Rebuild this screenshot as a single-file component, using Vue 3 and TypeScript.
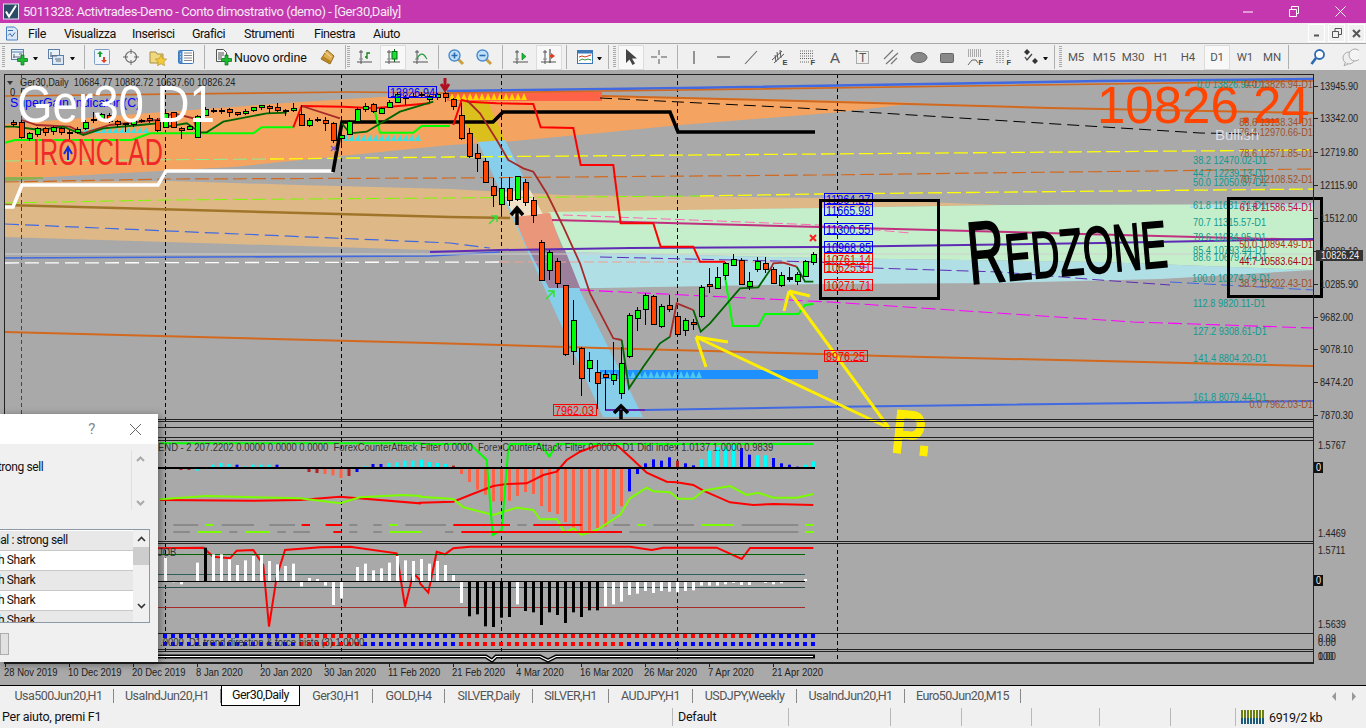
<script setup lang="ts">
type XY = [number, number]
type Candle = [number, number, number, number, string]

const z3 = (p: XY): XY => [p[0] / 3, 70 + p[1] / 3]
const z4 = (p: XY): XY => [430 + p[0] / 3, 80 + p[1] / 3]
const z6 = (p: XY): XY => [p[0] / 3, 410 + p[1] / 3]
const z7 = (p: XY): XY => [420 + p[0] / 3, 420 + p[1] / 3]
const str = (a: XY[]) => a.map((p) => p[0].toFixed(1) + ',' + p[1].toFixed(1)).join(' ')
const flat = (a: number[], fn: (p: XY) => XY = (p) => p): XY[] => {
  const out: XY[] = []
  for (let i = 0; i < a.length; i += 2) out.push(fn([a[i], a[i + 1]]))
  return out
}

const bands = [
  { fill: '#f4a460', p: [5,124,150,113,300,102,445,93,602,96,800,100,920,103,830,113,680,125,600,133,502,142,450,145,233,167,50,177,5,178] },
  { fill: '#8fb050', p: [5,177,43,177,43,179,5,181] },
  { fill: '#deb887', p: [5,182,170,181,300,185,450,189,563,195,820,198,950,203,1000,205,820,208,560,213,535,250,430,250,5,237] },
  { fill: '#c4efca', p: [548,212,820,208,1000,205,1313,204,1313,270,1100,262,820,258,565,252] },
  { fill: '#b0e0e6', p: [565,252,820,258,1100,262,1313,270,1160,279,1000,283,820,284,600,288,580,288] },
  { fill: '#b0e0e6', p: [1190,206,1313,203,1313,207,1190,208] },
  { fill: '#dbbf1c', p: [462,100,487,100,505,140,478,142,466,125] },
  { fill: '#87ceeb', p: [478,142,505,140,643,417,603,417] },
  { fill: '#f3e2ca', p: [502,192,530,190,562,250,531,250] },
  { fill: '#e9967a', p: [514,217,550,213,562,250,528,250] },
  { fill: '#9b7f9b', p: [529,250,565,250,580,288,549,288] },
  { fill: '#ff6347', p: [447,92,602,92,602,101,447,101] },
  { fill: '#1e90ff', p: [600,370,818,370,818,379,600,379] }
].map((b) => ({ fill: b.fill, points: str(flat(b.p)) }))

const zig = (x0: number, x1: number, top: number, bot: number, step = 6) => {
  const a: XY[] = [[x0, bot]]
  for (let x = x0; x + step <= x1; x += step) a.push([x + step / 2, top], [x + step, bot])
  return str(a)
}
const zigs = [
  { c: '#40e0e0', points: zig(77, 150, 127, 133) },
  { c: '#40e0e0', points: zig(343, 423, 134, 141) },
  { c: '#ffd700', points: zig(449, 528, 93, 100) },
  { c: '#4fc8f0', points: zig(600, 705, 371, 378) }
]

const lines = [
  { c: '#4169e1', w: 2.5, p: flat([447,91,683,88,1100,81,1313,79]) },
  { c: '#d2691e', w: 1.6, p: flat([5,96,350,92,447,93,683,90,1313,81]) },
  { c: '#d2691e', w: 2, p: flat([602,96,800,101,1050,108,1313,113]) },
  { c: '#000', w: 1, d: '12 6', p: flat([600,98,800,108,1200,133,1260,134]) },
  { c: '#90ee90', w: 1, d: '14 5', p: flat([5,161,270,159]) },
  { c: '#ffff00', w: 1.3, d: '14 5', p: flat([270,159,450,157,820,154,1313,150]) },
  { c: '#d2691e', w: 1.2, d: '14 5', p: flat([5,182,170,179,450,178,820,175,1313,169]) },
  { c: '#7cfc00', w: 1, d: '14 5', p: flat([5,203,165,200,450,198,700,196]) },
  { c: '#ffff00', w: 1.3, d: '14 5', p: flat([700,196,820,194,1313,189]) },
  { c: '#a0752a', w: 2.4, p: flat([5,205,450,217,510,218]) },
  { c: '#4169e1', w: 1.2, d: '14 6', p: flat([5,224,450,243,490,248]) },
  { c: '#ff69b4', w: 1, d: '10 4', p: flat([563,215,820,225,910,233]) },
  { c: '#c0307f', w: 2, p: flat([552,220,820,227,1313,240]) },
  { c: '#5f2bb5', w: 2, p: flat([430,252,500,250,630,248,820,247,1100,243,1313,239]) },
  { c: '#4169e1', w: 1.6, p: flat([5,258,430,256,500,252]) },
  { c: '#cfcfcf', w: 1, p: flat([5,254,1313,254]) },
  { c: '#fff', w: 1.3, d: '14 6', p: flat([5,263,500,262]) },
  { c: '#f0a090', w: 1, d: '10 4', p: flat([500,262,830,262]) },
  { c: '#5f2bb5', w: 1, d: '12 5', p: flat([600,257,820,262,872,268,1000,272,1100,280,1170,285]) },
  { c: '#4169e1', w: 1, d: '12 5', p: flat([1170,282,1313,290]) },
  { c: '#ff00ff', w: 1.1, d: '14 5', p: flat([580,290,830,302,1133,322,1313,328]) },
  { c: '#d2691e', w: 2, p: flat([5,332,430,343,600,348,820,354,883,356,1313,366]) },
  { c: '#5f2bb5', w: 2, p: flat([605,410,645,410]) },
  { c: '#4169e1', w: 2, p: flat([645,410,820,407,1313,401]) },
  { c: '#fff', w: 3.4, p: flat([5,207,13,207,22,185,158,185,166,171,333,171]) },
  { c: '#000', w: 3.6, p: flat([333,172,342,122,493,122,503,112,670,112,678,132,815,132]) },
  { c: '#00ff00', w: 2, p: flat([15,218,45,210,395,210,450,190,760,190,785,172,880,172], z3) },
  { c: '#00ff00', w: 2, p: flat([1125,125,1140,188,1240,188,1265,168,1350,168], z3) },
  { c: '#00ff00', w: 2, p: flat([885,590,908,738,985,738,1005,702,1105,702,1125,675,1150,672], z4) },
  { c: '#ff0000', w: 2, p: flat([880,172,905,108,1030,110,1120,115,1290,100], z3) },
  { c: '#ff0000', w: 2, p: flat([70,135,95,60,115,65,200,70,310,72,332,142,430,144,452,255,550,255,572,430,670,430,692,500,790,500,810,545,885,545], z4) },
  { c: '#a52a2a', w: 1.8, p: flat([65,150,110,165,210,170,250,190,330,165,470,150,520,130,580,145,590,180], z3) },
  { c: '#a52a2a', w: 1.8, p: flat([905,108,1020,145], z3) },
  { c: '#a52a2a', w: 1.8, p: flat([110,60,150,100,200,180,235,240,280,265,310,275,350,340,400,440,450,550,480,640,550,775,575,780], z4) },
  { c: '#a52a2a', w: 1.8, p: flat([720,770,740,670,790,690], z4) },
  { c: '#a52a2a', w: 1.8, p: flat([1020,570,1030,550,1060,548,1100,560], z4) },
  { c: '#006400', w: 1.8, p: flat([15,170,45,170,120,180,190,170,250,195,310,175,420,165,470,160,490,145,500,170,560,160,600,187,620,187,670,155,800,130,860,128], z3) },
  { c: '#006400', w: 1.8, p: flat([1025,160,1050,190,1100,185,1200,125,1300,95], z3) },
  { c: '#006400', w: 1.8, p: flat([575,780,597,925,640,860,690,790,720,770], z4) },
  { c: '#006400', w: 1.8, p: flat([790,690,812,755,840,730,930,625,985,622,1020,570], z4) },
  { c: '#006400', w: 1.8, p: flat([1100,560,1125,605,1150,605], z4) }
].map((l) => ({ c: l.c, w: l.w, d: l.d ?? 'none', points: str(l.p) }))

const leftC: Candle[] = [
  [150,170,156,163,'r'],[150,205,158,202,'r'],[185,212,190,205,'g'],[170,200,175,193,'g'],[172,198,175,188,'r'],
  [168,195,172,183,'g'],[172,195,175,187,'r'],[180,210,186,188,'k'],[172,193,178,187,'g'],[150,180,157,175,'g'],
  [125,158,147,150,'k'],[130,150,133,145,'g'],[130,160,135,155,'r'],[150,170,154,163,'r'],[158,185,160,162,'k'],
  [148,170,151,163,'g'],[148,158,150,153,'k'],[135,158,144,150,'r'],[145,185,150,182,'r'],[125,175,129,172,'g'],
  [125,175,127,172,'r'],[170,208,175,180,'r'],[165,180,170,178,'g'],[135,205,140,202,'g'],[112,138,118,135,'g'],
  [115,130,120,122,'k'],[115,133,122,124,'k'],[115,140,118,128,'r'],[125,138,127,132,'r'],[118,135,123,130,'g'],
  [110,125,112,120,'g'],[105,120,106,112,'g'],[105,130,110,116,'r'],[98,125,113,121,'r'],[118,138,120,122,'k'],
  [100,125,115,121,'g'],[105,168,133,166,'r'],[145,170,150,166,'g'],[140,155,148,150,'k'],[140,182,150,160,'r'],
  [155,220,160,210,'r'],[140,235,197,205,'g'],[150,195,155,192,'g'],[110,155,118,153,'g'],[100,125,108,118,'g'],
  [100,128,103,125,'r'],[110,130,115,130,'g'],[90,115,97,112,'g'],[65,100,74,98,'g'],[75,105,82,84,'k'],
  [70,85,78,80,'k'],[65,85,72,74,'k'],[75,95,80,88,'g'],[68,90,74,82,'g'],[65,95,70,82,'r']
]
const rightC: Candle[] = [
  [55,90,58,80,'r'],[70,180,105,175,'r'],[145,235,160,230,'r'],[192,275,220,235,'r'],[235,310,244,308,'r'],
  [295,380,320,346,'r'],[295,405,325,373,'g'],[290,378,325,362,'r'],[288,362,290,358,'g'],[298,378,308,368,'r'],
  [350,428,362,405,'r'],[480,603,488,600,'r'],[510,600,518,570,'g'],[535,625,545,610,'r'],[615,827,616,823,'r'],
  [660,855,722,814,'g'],[800,948,806,895,'r'],[815,905,842,865,'g'],[840,988,878,910,'r'],[870,990,884,892,'r'],
  [785,915,884,902,'g'],[800,958,850,940,'g'],[700,835,706,830,'g'],[680,752,692,715,'g'],[640,735,647,688,'g'],
  [645,735,650,732,'r'],[672,745,680,738,'g'],[645,695,676,688,'r'],[700,765,710,762,'r'],[715,768,722,750,'g'],
  [717,750,728,733,'r'],[615,715,622,708,'g'],[565,640,613,619,'r'],[562,628,592,624,'g'],[545,600,550,586,'g'],
  [523,558,538,556,'g'],[535,615,541,612,'r'],[575,630,604,618,'g'],[530,575,545,568,'g'],[530,580,549,567,'r'],
  [560,612,568,610,'r'],[575,622,586,616,'g'],[562,605,592,597,'k'],[575,614,584,604,'g'],[540,590,545,588,'g'],[515,555,524,546,'g']
]
const candleFill: Record<string, string> = { r: '#ff4500', g: '#00ff00', k: '#000' }
const candles = [
  ...leftC.map((c, i) => ({ x: (40 + 24 * i) / 3, h: 70 + c[0] / 3, l: 70 + c[1] / 3, t: 70 + c[2] / 3, b: 70 + c[3] / 3, f: candleFill[c[4]] })),
  ...rightC.map((c, i) => ({ x: 453.3 + 8 * i, h: 80 + c[0] / 3, l: 80 + c[1] / 3, t: 80 + c[2] / 3, b: 80 + c[3] / 3, f: candleFill[c[4]] }))
].map((c) => ({ ...c, x: Math.round(c.x) }))

const histColor: Record<string, string> = { c: '#00ffff', b: '#0000ff', s: '#ff6347', d: '#b22222', w: '#ffffff', k: '#000000' }
const makeBars = (x0: number, base: number, items: [number, string][]) =>
  items.map((it, n) => {
    const h = it[0] / 3
    return { x: x0 + 8 * n - 1.5, y: h > 0 ? base - h : base, h: Math.abs(h), f: histColor[it[1]] }
  })

const hist2 = [
  ...makeBars(181, 468, [[-6,'d'],[-6,'d'],[-8,'c'],[2,'c'],[10,'c'],[15,'c'],[12,'c'],[10,'b'],[5,'c'],[10,'c'],[10,'c'],[10,'c'],[10,'b'],[3,'b'],[3,'c'],[-3,'s'],[-12,'d'],[-15,'d'],[-18,'s'],[-22,'s'],[-30,'s'],[-24,'d'],[-12,'b'],[5,'c'],[12,'b'],[12,'b'],[15,'c'],[17,'c'],[22,'c'],[22,'c']]),
  ...makeBars(421.5, 468, [[25,'c'],[18,'c'],[15,'c'],[12,'c'],[7,'d'],[-18,'s'],[-42,'s'],[-65,'s'],[-80,'s'],[-100,'s'],[-100,'s'],[-98,'s'],[-84,'s'],[-72,'s'],[-78,'s'],[-114,'s'],[-132,'s'],[-138,'s'],[-162,'s'],[-180,'s'],[-190,'s'],[-188,'s'],[-180,'s'],[-176,'s'],[-138,'s'],[-115,'s'],[-70,'b'],[-18,'b'],[14,'b'],[26,'b'],[22,'b'],[32,'b'],[22,'d'],[14,'b'],[8,'b'],[26,'c'],[52,'c'],[62,'c'],[64,'c'],[72,'c'],[60,'b'],[40,'b'],[38,'c'],[38,'c'],[30,'b'],[14,'b'],[10,'b'],[4,'b'],[10,'c'],[20,'c']])
]
const hist3 = [
  ...makeBars(165.5, 581, [[70,'w'],[-4,'w'],[-10,'w'],[0,'w'],[55,'w'],[100,'k'],[80,'w'],[80,'w'],[65,'w'],[48,'w'],[62,'w'],[75,'w'],[78,'w'],[60,'w'],[50,'w'],[45,'w'],[52,'w'],[-16,'w'],[9,'w'],[6,'w'],[-14,'w'],[-72,'w'],[-52,'w'],[0,'w'],[42,'w'],[52,'w'],[32,'w'],[38,'w'],[55,'w'],[75,'w'],[62,'w'],[60,'w']]),
  ...makeBars(421.5, 581, [[66,'w'],[52,'w'],[60,'w'],[48,'w'],[18,'w'],[-66,'w'],[-106,'k'],[-100,'k'],[-136,'k'],[-138,'k'],[-110,'k'],[-108,'k'],[-70,'w'],[-90,'k'],[-94,'k'],[-132,'k'],[-94,'k'],[-102,'k'],[-126,'k'],[-94,'k'],[-108,'k'],[-88,'k'],[-88,'k'],[-76,'w'],[-70,'w'],[-62,'w'],[-42,'w'],[-38,'w'],[-30,'w'],[-36,'w'],[-30,'w'],[-32,'w'],[-34,'w'],[-30,'w'],[-28,'w'],[-14,'w'],[-14,'w'],[-14,'w'],[-10,'w'],[-6,'w'],[-12,'w'],[-12,'w'],[-3,'w'],[-6,'w'],[-10,'w'],[-7,'w'],[-3,'w'],[0,'w'],[6,'w']])
]

const oscLines = [
  { c: '#ff0000', w: 2, p: [...flat([480,270,760,272,900,270,1020,260,1260,280], z6), ...flat([0,248,100,245,150,225,220,198,260,192,320,190,370,165,410,155,440,120,480,95,540,73,590,75,640,120,680,158,740,185,770,187,820,195,850,212,930,247,1000,255,1060,252,1180,255], z7)] },
  { c: '#7cfc00', w: 2, p: [...flat([480,268,620,258,900,265,1020,280,1080,262,1210,255,1260,258], z6), ...flat([0,230,100,237,130,262,220,285,250,275,290,263,340,270,360,298,410,297,435,338,460,325,485,345,530,330,600,285,630,235,680,203,700,214,750,217,775,236,820,236,850,212,930,198,980,225,1015,218,1060,233,1130,233,1180,222], z7)] },
  { c: '#00ff00', w: 2, p: [...flat([480,100,1260,100], z6), ...flat([0,72,150,72,200,120,218,345,245,330,265,85,270,72,360,72,388,110,410,72,1180,72], z7)] },
  { c: '#ff0000', w: 2, p: [...flat([470,415,610,413,640,440,690,445,710,422,760,420,790,465,807,650,830,500,855,420,960,412,1050,410,1190,430,1215,590,1240,490,1260,510], z6), ...flat([0,490,25,518,50,395,75,403,100,385,150,380,630,380,695,390,730,383,890,383,965,417,990,384,1180,384], z7)] }
].map((l) => ({ c: l.c, w: l.w, points: str(l.p) }))

const G = '#8a8a8a', R = '#ff0000', L = '#7cfc00'
const seg = (a: [number, number, string][], y: number, fn: (p: XY) => XY) =>
  a.map((s) => {
    const p0 = fn([s[0], y]), p1 = fn([s[1], y])
    return { x1: p0[0], x2: p1[0], y: p0[1], c: s[2] }
  })
const segments = [
  ...seg([[520,595,G],[617,640,L],[665,762,G],[808,885,G],[905,930,R],[977,1025,R],[1048,1072,G],[1120,1145,G],[1168,1194,L],[1216,1260,G]], 345, z6),
  ...seg([[520,570,G],[592,665,L],[688,712,G],[736,810,L],[832,858,G],[880,930,G],[1000,1025,R],[1048,1072,G],[1120,1145,G],[1168,1260,L]], 366, z6),
  ...seg([[0,78,G],[100,270,R],[292,320,G],[340,485,R],[580,630,G],[652,678,L],[700,822,G],[845,942,L],[965,1135,G],[1155,1182,L]], 315, z7),
  ...seg([[0,5,L],[75,100,G],[124,606,R],[628,1135,G],[1155,1182,L]], 336, z7)
]

const squares: { x: number; y: number; f: string }[] = []
for (let x = 165; x <= 813; x += 8) {
  const mid = x >= 301 && x <= 357
  squares.push({ x: x - 2, y: 634, f: mid || (x >= 461 && x <= 749) ? '#ff0000' : '#0000ff' })
  squares.push({ x: x - 2, y: 642, f: mid || (x >= 461 && x <= 621) ? '#ff0000' : '#0000ff' })
}

const vDash = [
  { x: 21, c: '#5030a0' }, { x: 165, c: '#000' }, { x: 341, c: '#000' }, { x: 501, c: '#000' }, { x: 677, c: '#000' }, { x: 837, c: '#000' }
]
const hFrame = [419, 421, 427, 437, 440, 541, 543, 633, 649, 651, 663]
const panelLines = [
  { y: 554, c: '#006400' }, { y: 574, c: '#2f5f5f' }, { y: 587, c: '#2f4f4f' }, { y: 607, c: '#a52a2a' }
]

const axisTicks: [string, number][] = [
  ['13945.90', 86], ['13342.00', 118], ['12719.80', 152], ['12115.90', 185], ['11512.00', 218], ['10908.10', 251],
  ['10285.90', 284], ['9682.00', 317], ['9078.10', 349], ['8474.20', 382], ['7870.30', 415]
]
const axisSmall: [string, number][] = [
  ['1.5767', 445], ['1.4469', 533], ['1.5711', 550], ['1.5639', 624], ['0.09', 638], ['0.00', 642], ['0.00', 656], ['100', 656]
]
const dates: [string, number, number][] = [
  ['28 Nov 2019', 4, 5], ['10 Dec 2019', 68, 69], ['20 Dec 2019', 132, 133], ['8 Jan 2020', 196, 197], ['20 Jan 2020', 260, 261],
  ['30 Jan 2020', 324, 325], ['11 Feb 2020', 388, 389], ['21 Feb 2020', 452, 453], ['4 Mar 2020', 516, 517], ['16 Mar 2020', 580, 581],
  ['26 Mar 2020', 644, 645], ['7 Apr 2020', 708, 709], ['21 Apr 2020', 772, 773]
]
const fibL: [string, number, number][] = [
  ['0.0 13826.94-D1', 1197, 88], ['38.2 12470.02-D1', 1193, 164], ['44.7 12239.13-D1', 1193, 177], ['50.0 12050.87-D1', 1193, 186],
  ['61.8 11631.71-D1', 1193, 209], ['70.7 11315.57-D1', 1193, 226], ['78.6 11034.95-D1', 1193, 241], ['85.4 10793.44-D1', 1193, 254],
  ['88.6 10679.74-D1', 1193, 261], ['100.0 10274.79-D1', 1192, 282], ['112.8 9820.11-D1', 1193, 307], ['127.2 9308.61-D1', 1193, 335],
  ['141.4 8804.20-D1', 1193, 362], ['161.8 8079.44-D1', 1193, 401]
]
const fibR: [string, number, string][] = [
  ['0.0 13826.94-D1', 88, '#a0522d'], ['88.6 13138.34-D1', 126, '#a0522d'], ['76.4 12970.66-D1', 136, '#a0522d'], ['78.6 12571.85-D1', 157, '#a0522d'],
  ['70.7 12108.52-D1', 183, '#a0522d'], ['61.8 11586.54-D1', 211, '#c40040'], ['50.0 10894.49-D1', 248, '#b03010'], ['44.7 10583.64-D1', 265, '#a80010'],
  ['38.2 10202.43-D1', 287, '#a0522d'], ['0.0 7962.03-D1', 408, '#a0522d']
]
const boxes: { t: string; x: number; y: number; w: number; c: string }[] = [
  { t: '11864.27', x: 824, y: 193, w: 48, c: '#0000ff' },
  { t: '10761.14', x: 824, y: 253, w: 48, c: '#ff0000' },
  { t: '11665.98', x: 824, y: 204, w: 48, c: '#0000ff' },
  { t: '11300.55', x: 824, y: 223, w: 48, c: '#0000ff' },
  { t: '10968.85', x: 824, y: 241, w: 48, c: '#0000ff' },
  { t: '10625.91', x: 824, y: 261, w: 48, c: '#ff0000' },
  { t: '10271.71', x: 824, y: 279, w: 48, c: '#ff0000' },
  { t: '8976.25', x: 824, y: 350, w: 43, c: '#ff0000' },
  { t: '13826.94', x: 388, y: 86, w: 48, c: '#0000ff' },
  { t: '7962.03', x: 553, y: 404, w: 43, c: '#ff0000' }
]
const arrows = [
  [889,428,696,337], [696,337,728,342], [696,337,706,367],
  [889,428,789,291], [789,291,810,296], [789,291,784,311]
]

const AX = '<path d="M5 2v14M1 14h15M3 4h4" stroke="#555" fill="none"/><path d="M3 11h4" stroke="#888"/>'
const plus = '<path d="M11 7h3v3.500h3.500v3h-3.500v3.500h-3v-3.500h-3.500v-3h3.500z" fill="#18c030" stroke="#0a6a18" stroke-width=".7"/>'
const win = '<rect x="1.500" y="1.500" width="12" height="10" fill="#e8f2fb" stroke="#5a7fa8"/><path d="M1.500 4h12" stroke="#5a7fa8"/><path d="M4 6v4M3 9h8M9 6h3" stroke="#667" fill="none"/>'
const letter = (c: string) => `<text x="12.500" y="17" font-size="7.500" font-weight="700" font-family="Liberation Sans" fill="#444">${c}</text>`
const icons: Record<string, string> = {
  chart: win + plus,
  profile: '<rect x="1.500" y="1.500" width="11" height="9" fill="#e8f2fb" stroke="#5a7fa8"/><rect x="5.500" y="7.500" width="11" height="9" fill="#d8e8f7" stroke="#5a7fa8"/><path d="M4 4v5M3 8h7M8 11h6M9 13h5" stroke="#667" fill="none"/>',
  market: '<rect x="1.500" y="1.500" width="15" height="15" rx="1" fill="#eef4fb" stroke="#7f9fc4"/><path d="M7 3l3 3H8v3H6V6H4z" fill="#18a030"/><path d="M11 15l-3-3h2V9h2v3h2z" fill="#e04020"/>',
  nav: '<circle cx="9" cy="9" r="5.500" fill="none" stroke="#666" stroke-width="1.200"/><path d="M9 1v5M9 12v5M1 9h5M12 9h5" stroke="#666"/>',
  fav: '<path d="M1 4h6l1 2h6v9H1z" fill="#f0d880" stroke="#a89040"/><path d="M12 7l1.800 3.600 3.900.5-2.800 2.700.7 3.900-3.600-1.900-3.500 1.900.7-3.900-2.900-2.700 4-.5z" fill="#f2c93a" stroke="#b08a20" stroke-width=".6"/>',
  list: '<rect x="1.500" y="2.500" width="15" height="13" rx="1" fill="#fff" stroke="#3a78b8"/><rect x="2" y="3" width="3.500" height="12" fill="#4a8ad0"/><path d="M7 5h8M7 7.500h8M7 10h8M7 12.500h8" stroke="#888"/><path d="M3 6h1M3 9h1M3 12h1" stroke="#fff"/>',
  order: '<path d="M2.500 1.500h7l3 3v9h-10z" fill="#f7f7f7" stroke="#555"/><path d="M4 5h6M4 7h6M4 9h4M4 11h3" stroke="#555"/>' + plus,
  diamond: '<path d="M9 2l7 6-4 8-9-5z" fill="#e0b050" stroke="#8a6420"/><path d="M3 11l9 5 1-3-8-5z" fill="#b88428"/><path d="M7 4l6 5" stroke="#f4dca0"/>',
  bar: AX + '<path d="M11 11V5h3M9 9h2" stroke="#108010" fill="none" stroke-width="1.300"/>',
  candle: AX + '<path d="M10.500 1v13" stroke="#0a6a18"/><rect x="8" y="3.500" width="5" height="7.500" fill="#18e030" stroke="#0a6a18"/>',
  line: AX + '<path d="M5 11c2-5 5-6 7-4s2 3 3 4" stroke="#2a9a40" fill="none" stroke-width="1.200"/>',
  zin: '<path d="M11 11l5 5" stroke="#c8a040" stroke-width="3"/><circle cx="7.500" cy="7.500" r="5.500" fill="#bfe0f8" stroke="#4a8ad0" stroke-width="1.400"/><path d="M4.500 7.500h6M7.500 4.500v6" stroke="#2a6ab0" stroke-width="1.600"/>',
  zout: '<path d="M11 11l5 5" stroke="#c8a040" stroke-width="3"/><circle cx="7.500" cy="7.500" r="5.500" fill="#bfe0f8" stroke="#4a8ad0" stroke-width="1.400"/><path d="M4.500 7.500h6" stroke="#2a6ab0" stroke-width="1.600"/>',
  scroll: AX + '<path d="M10 5v7l4-3.500z" fill="#18c030" stroke="#0a6a18" stroke-width=".6"/>',
  shift: AX + '<path d="M10 1v14" stroke="#333"/><path d="M15 8l-4-3v2h-1v2h1v2z" fill="#e04020"/>',
  tpl: '<rect x="1.500" y="2.500" width="15" height="13" fill="#fff" stroke="#3a78b8"/><rect x="2" y="3" width="14" height="2.500" fill="#3a78b8"/><path d="M3 9l3-1 3 1 3-1 3-1" stroke="#d04020" fill="none"/><path d="M3 13l3-2 3 1 3-1 3 1" stroke="#2a9a40" fill="none"/>',
  cursor: '<path d="M4 1v14l3.500-3.500 3 5.500 2.500-1.500-3-5H15z" fill="#444"/>',
  cross: '<path d="M9 2v5M9 11v5M1 9h6M11 9h6" stroke="#555"/>',
  vline: '<path d="M9 3v13" stroke="#555" stroke-width="1.200"/>',
  hline: '<path d="M3 9h13" stroke="#555" stroke-width="1.200"/>',
  trend: '<path d="M3 16L15 3" stroke="#666" stroke-width="1.100"/>',
  chan: '<path d="M2 12L12 3M4 15L14 6M7 4l1 8M10 2l1 8M5 7l1 7" stroke="#555" fill="none"/>' + letter('E'),
  fib: '<path d="M2 3h13M2 5.500h13M2 8h13M2 10.500h13M2 14h10" stroke="#666" stroke-dasharray="1 1" fill="none"/>' + letter('F'),
  a: '<text x="4" y="15" font-size="15" font-family="Liberation Sans" fill="#555">A</text>',
  t: '<rect x="2.500" y="3.500" width="12" height="12" fill="none" stroke="#666" stroke-dasharray="1 1"/><rect x="1.500" y="2" width="2" height="2" fill="#555"/><text x="5" y="14" font-size="12" font-family="Liberation Sans" fill="#555">T</text>',
  par: '<path d="M2 11l9-9M4 16L16 5M9 16l6-6" stroke="#777" stroke-width="1.200" fill="none"/>',
  ell: '<ellipse cx="9" cy="9.500" rx="8" ry="5" fill="#888" stroke="#666"/>',
  rect: '<rect x="2.500" y="5.500" width="13" height="9" rx="1" fill="#888" stroke="#666"/>',
  fchan: '<path d="M2 2h14M2 4h14M2 6h14M2 8h14" stroke="#666" stroke-dasharray="1 1"/><path d="M2 17l4-5h4l2 3" stroke="#666" fill="none"/>' + letter('F'),
  vfib: '<path d="M3 2v13M6 2v13M9 2v13M14 2v8" stroke="#666" stroke-dasharray="1 1"/>' + letter('F'),
  checks: '<path d="M5 1l3 3-3 3-3-3z M13 10l3 3-3 3-3-3z" fill="#333"/><path d="M3 9l2 3 5-6" stroke="#444" fill="none" stroke-width="1.300"/>',
  search: '<circle cx="10.500" cy="6.500" r="4.500" fill="#fff" stroke="#2a6ab0" stroke-width="1.800"/><path d="M7 10l-4.500 6" stroke="#2a6ab0" stroke-width="2.600"/>',
  chat: '<circle cx="8" cy="10" r="6" fill="#eee" stroke="#aaa"/><circle cx="14" cy="7" r="6" fill="#f4f4f4" stroke="#aaa"/><path d="M4 15l-1 3 4-2" fill="#eee" stroke="#aaa"/>'
}
interface Tool { x: number; w: number; k: string; kind?: string; t?: string; hi?: boolean }
const rawTools: Tool[] = [
  { x: 2, w: 3, k: '', kind: 'grip' }, { x: 10, w: 18, k: 'chart' }, { x: 33, w: 5, k: '', kind: 'drop' }, { x: 47, w: 18, k: 'profile' }, { x: 70, w: 5, k: '', kind: 'drop' },
  { x: 84, w: 1, k: '', kind: 'sep' }, { x: 93, w: 18, k: 'market' }, { x: 122, w: 18, k: 'nav' }, { x: 149, w: 18, k: 'fav' }, { x: 177, w: 18, k: 'list' },
  { x: 204, w: 1, k: '', kind: 'sep' }, { x: 214, w: 18, k: 'order' }, { x: 234, w: 74, k: '', kind: 'label', t: 'Nuovo ordine' }, { x: 318, w: 18, k: 'diamond' },
  { x: 345, w: 1, k: '', kind: 'sep' }, { x: 347, w: 3, k: '', kind: 'grip' }, { x: 356, w: 18, k: 'bar' }, { x: 380, w: 26, k: 'candle', hi: true }, { x: 412, w: 18, k: 'line' },
  { x: 438, w: 1, k: '', kind: 'sep' }, { x: 447, w: 18, k: 'zin' }, { x: 475, w: 18, k: 'zout' }, { x: 502, w: 1, k: '', kind: 'sep' }, { x: 512, w: 18, k: 'scroll' },
  { x: 536, w: 26, k: 'shift', hi: true }, { x: 566, w: 1, k: '', kind: 'sep' }, { x: 576, w: 18, k: 'tpl' }, { x: 597, w: 5, k: '', kind: 'drop' },
  { x: 608, w: 1, k: '', kind: 'sep' }, { x: 613, w: 3, k: '', kind: 'grip' }, { x: 618, w: 26, k: 'cursor', hi: true }, { x: 650, w: 18, k: 'cross' }, { x: 677, w: 1, k: '', kind: 'sep' },
  { x: 685, w: 18, k: 'vline' }, { x: 714, w: 18, k: 'hline' }, { x: 742, w: 18, k: 'trend' }, { x: 770, w: 18, k: 'chan' }, { x: 798, w: 18, k: 'fib' }, { x: 826, w: 18, k: 'a' },
  { x: 854, w: 18, k: 't' }, { x: 882, w: 18, k: 'par' }, { x: 910, w: 18, k: 'ell' }, { x: 938, w: 18, k: 'rect' }, { x: 966, w: 18, k: 'fchan' }, { x: 994, w: 18, k: 'vfib' },
  { x: 1022, w: 18, k: 'checks' }, { x: 1043, w: 5, k: '', kind: 'drop' }, { x: 1054, w: 1, k: '', kind: 'sep' }, { x: 1059, w: 3, k: '', kind: 'grip' },
  { x: 1066, w: 20, k: '', kind: 'tf', t: 'M5' }, { x: 1093, w: 22, k: '', kind: 'tf', t: 'M15' }, { x: 1122, w: 22, k: '', kind: 'tf', t: 'M30' }, { x: 1151, w: 20, k: '', kind: 'tf', t: 'H1' },
  { x: 1178, w: 20, k: '', kind: 'tf', t: 'H4' }, { x: 1204, w: 26, k: '', kind: 'tf', t: 'D1', hi: true }, { x: 1235, w: 20, k: '', kind: 'tf', t: 'W1' }, { x: 1262, w: 20, k: '', kind: 'tf', t: 'MN' },
  { x: 1288, w: 1, k: '', kind: 'sep' }, { x: 1309, w: 18, k: 'search' }, { x: 1339, w: 22, k: 'chat' }
]
const tools = rawTools.map((t, i) => ({ ...t, gap: t.x - (i ? rawTools[i - 1].x + rawTools[i - 1].w : 0) }))

const menus = ['File', 'Visualizza', 'Inserisci', 'Grafici', 'Strumenti', 'Finestra', 'Aiuto']
const tabs: { t: string; w: number; on?: boolean }[] = [
  { t: 'Usa500Jun20,H1', w: 110 }, { t: 'UsaIndJun20,H1', w: 107 }, { t: 'Ger30,Daily', w: 79, on: true }, { t: 'Ger30,H1', w: 73 }, { t: 'GOLD,H4', w: 72 },
  { t: 'SILVER,Daily', w: 88 }, { t: 'SILVER,H1', w: 76 }, { t: 'AUDJPY,H1', w: 84 }, { t: 'USDJPY,Weekly', w: 104 }, { t: 'UsaIndJun20,H1', w: 108 }, { t: 'Euro50Jun20,M15', w: 116 }
]
const statusCells: { t: string; w: number }[] = [
  { t: 'Per aiuto, premi F1', w: 673 }, { t: 'Default', w: 116 }, { t: '', w: 102 }, { t: '', w: 71 }, { t: '', w: 70 }, { t: '', w: 68 }, { t: '', w: 71 }, { t: '', w: 65 }
]
const listRows = ['h Shark', 'h Shark', 'h Shark', 'h Shark']
const meterBars = [0, 1, 2, 3, 4, 5, 6, 7]
</script>

<template>
  <div class="app">
    <header class="title">
      <svg class="app-ico" viewBox="0 0 16 16" width="16" height="17">
        <rect x=".5" y=".5" width="15" height="15" fill="#2b4a66" stroke="#dfe6ee" />
        <path d="M3 8l3 5 7-11" stroke="#fff" stroke-width="2" fill="none" />
      </svg>
      <span class="title-text">5011328: Activtrades-Demo - Conto dimostrativo (demo) - [Ger30,Daily]</span>
      <div class="win-btns">
        <svg width="10" height="10" viewBox="0 0 10 10"><path d="M0 5h10" stroke="#fff" /></svg>
        <svg width="10" height="11" viewBox="0 0 10 11"><path d="M.5 3.500h7v7h-7zM2.500 3.500v-3h7v7h-2" stroke="#fff" fill="none" /></svg>
        <svg width="11" height="11" viewBox="0 0 11 11"><path d="M.5.500l10 10M10.500.500l-10 10" stroke="#fff" /></svg>
      </div>
    </header>

    <nav class="menu">
      <div class="menu-ico">
        <svg viewBox="0 0 16 16" width="16" height="17">
          <path d="M2.500 1.500h8l3 3v10h-11z" fill="#dbe9f7" stroke="#4a80c0" />
          <path d="M4 5h5M4 10l2-2 2 3 3-4" stroke="#3a6ab0" fill="none" />
        </svg>
      </div>
      <span v-for="m in menus" :key="m" class="menu-item">{{ m }}</span>
      <div class="mdi">
        <span class="mdi-btn"><svg width="8" height="8" viewBox="0 0 8 8"><path d="M1 6.500h5" stroke="#555" stroke-width="2" /></svg></span>
        <span class="mdi-btn"><svg width="10" height="10" viewBox="0 0 10 10"><path d="M.5 3.500h6v6h-6zM3 3V.500h6.500v6H7" stroke="#555" fill="none" /></svg></span>
        <span class="mdi-btn"><svg width="9" height="9" viewBox="0 0 9 9"><path d="M1 1l7 7M8 1l-7 7" stroke="#555" stroke-width="2" /></svg></span>
      </div>
    </nav>

    <div class="toolbar">
      <template v-for="(t, i) in tools" :key="i">
        <span v-if="t.kind === 'sep'" class="t-sep" :style="{ marginLeft: t.gap + 'px' }"></span>
        <span v-else-if="t.kind === 'grip'" class="t-grip" :style="{ marginLeft: t.gap + 'px' }"></span>
        <span v-else-if="t.kind === 'drop'" class="t-drop" :style="{ marginLeft: t.gap + 'px' }"></span>
        <span v-else-if="t.kind === 'label'" class="t-label" :style="{ marginLeft: t.gap + 'px', width: t.w + 'px' }">{{ t.t }}</span>
        <span v-else-if="t.kind === 'tf'" class="t-tf" :class="{ hi: t.hi }" :style="{ marginLeft: t.gap + 'px', width: t.w + 'px' }">{{ t.t }}</span>
        <span v-else class="t-icon" :class="{ hi: t.hi }" :style="{ marginLeft: t.gap + 'px', width: t.w + 'px' }">
          <svg viewBox="0 0 18 18" width="18" height="18" v-html="icons[t.k]"></svg>
        </span>
      </template>
    </div>

    <main class="chart">
      <svg class="plot" viewBox="0 70 1366 615" width="1366" height="615">
        <polygon v-for="(b, i) in bands" :key="'b' + i" :points="b.points" :fill="b.fill" />
        <polygon v-for="(z, i) in zigs" :key="'z' + i" :points="z.points" :fill="z.c" />
        <line v-for="v in vDash" :key="'v' + v.x" :x1="v.x + .5" :x2="v.x + .5" y1="74" y2="662" :stroke="v.c" stroke-dasharray="4 3" />
        <polyline v-for="(l, i) in lines" :key="'l' + i" :points="l.points" :stroke="l.c" :stroke-width="l.w" :stroke-dasharray="l.d" fill="none" />

        <g v-for="(c, i) in candles" :key="'c' + i" shape-rendering="crispEdges">
          <line :x1="c.x + .5" :x2="c.x + .5" :y1="c.h" :y2="c.l" stroke="#000" />
          <rect :x="c.x - 2" :y="c.t" width="5" :height="Math.max(c.b - c.t, 1)" :fill="c.f" stroke="#000" />
        </g>

        <path d="M445 78v10M441 84l4 6 4-6" stroke="#b01020" stroke-width="3" fill="none" />
        <path d="M517 225v-14M511 215l6-7 6 7" stroke="#000" stroke-width="3.500" fill="none" />
        <path d="M621 420v-10M614 413l7-7 7 7" stroke="#000" stroke-width="3.500" fill="none" />
        <path d="M489 224l8-8M491 216h6v6" stroke="#32e032" stroke-width="1.500" fill="none" />
        <path d="M546 299l8-8M548 291h6v6" stroke="#32e032" stroke-width="1.500" fill="none" />
        <path d="M810 235l6 6M816 235l-6 6" stroke="#ff2020" stroke-width="2" />
        <path d="M331 146l5 5M336 146l-5 5" stroke="#7a60c8" stroke-width="1.500" />
        <path d="M68 160v-12M64 154l4-7 4 7" stroke="#1030e0" stroke-width="2" fill="none" />

        <line v-for="(a, i) in arrows" :key="'a' + i" :x1="a[0]" :y1="a[1]" :x2="a[2]" :y2="a[3]" stroke="#ffee00" stroke-width="3" />

        <text class="superg" transform="translate(10 107) scale(.95 1)">SuperGain Indicator (C)</text>
        <text class="chart-head" transform="translate(10 96) scale(.86 1)">0&#160;&#160;0</text>
        <path d="M7 81h6l-3 4z" fill="#333" />
        <text class="chart-head" transform="translate(20 86) scale(.84 1)">Ger30,Daily&#160;&#160;10684.77 10882.72 10637.60 10826.24</text>
        <text class="big-sym" x="17" y="122" textLength="198" lengthAdjust="spacingAndGlyphs">Ger30 D1</text>
        <text class="big-price" x="1097" y="123">10826.24</text>
        <text class="bullish" x="1215" y="140">Bullish</text>
        <text class="ironclad" transform="translate(33 165) scale(.68 1)">IRONCLAD</text>

        <text v-for="f in fibL" :key="'fl' + f[0]" class="fib teal" :transform="`translate(${f[1]} ${f[2]}) scale(.84 1)`">{{ f[0] }}</text>
        <text v-for="f in fibR" :key="'fr' + f[0]" class="fib" text-anchor="end" :fill="f[2]" :transform="`translate(1313 ${f[1]}) scale(.84 1)`">{{ f[0] }}</text>

        <g v-for="b in boxes" :key="'bx' + b.t">
          <rect :x="b.x + .5" :y="b.y + .5" :width="b.w" height="11" fill="none" :stroke="b.c" />
          <text class="box-t" :fill="b.c" :transform="`translate(${b.x + 2} ${b.y + 10.500}) scale(.83 1)`">{{ b.t }}</text>
        </g>

        <rect x="820.500" y="200.500" width="118" height="98" fill="none" stroke="#000" stroke-width="3" />
        <rect x="1228.500" y="198.500" width="93" height="98" fill="none" stroke="#000" stroke-width="3" />
        <text class="redzone" transform="translate(970 284) rotate(-5) scale(.59 1)"><tspan class="rz-r">R</tspan>EDZONE</text>
        <text class="pdot" transform="translate(890 452) rotate(6) scale(.8 1)">P.</text>

        <!-- frame and axis -->
        <rect x="4.500" y="74.500" width="1309" height="588" fill="none" stroke="#222" />
        <line v-for="y in hFrame" :key="'h' + y" x1="4" x2="1314" :y1="y + .5" :y2="y + .5" stroke="#222" />
        <g v-for="t in axisTicks" :key="'ax' + t[0]">
          <line x1="1314" x2="1318" :y1="t[1] + .5" :y2="t[1] + .5" stroke="#222" />
          <text class="axis" :transform="`translate(1320 ${t[1] + 4}) scale(.83 1)`">{{ t[0] }}</text>
        </g>
        <rect x="1316" y="250" width="47" height="11" fill="#333" />
        <text class="axis light" transform="translate(1321 259) scale(.83 1)">10826.24</text>

        <!-- indicators -->
        <rect v-for="(b, i) in hist2" :key="'h2' + i" :x="b.x" :y="b.y" width="3" :height="b.h" :fill="b.f" />
        <polyline v-for="(l, i) in oscLines" :key="'o' + i" :points="l.points" :stroke="l.c" :stroke-width="l.w" fill="none" />
        <line x1="158" x2="815" y1="468" y2="468" stroke="#000" stroke-width="2" />
        <line v-for="(s, i) in segments" :key="'s' + i" :x1="s.x1" :x2="s.x2" :y1="s.y" :y2="s.y" :stroke="s.c" stroke-width="2" />
        <text class="ind" transform="translate(158 451) scale(.86 1)">END - 2 207.2202 0.0000 0.0000 0.0000&#160;&#160;ForexCounterAttack Filter 0.0000&#160;&#160;ForexCounterAttack Filter 0.0000&#160;&#160;D1 Didi index 1.0137 1.0000 0.9839</text>

        <line v-for="p in panelLines" :key="'p' + p.y" x1="158" x2="805" :y1="p.y + .5" :y2="p.y + .5" :stroke="p.c" />
        <rect v-for="(b, i) in hist3" :key="'h3' + i" :x="b.x" :y="b.y" width="3" :height="b.h" :fill="b.f" />
        <line x1="158" x2="805" y1="581.500" y2="581.500" stroke="#000" />
        <text class="ind" transform="translate(158 556) scale(.86 1)">JOB</text>

        <rect v-for="(s, i) in squares" :key="'q' + i" :x="s.x" :y="s.y" width="4" height="4" :fill="s.f" />
        <text class="ind" transform="translate(160 646) scale(.86 1)">.0000&#160;&#160;D1 trend direction &amp; force histo (3) 1.0000</text>

        <path d="M158 656.500H486l6 4 4-4 3 0H540l8 4 8-4H815" stroke="#000" stroke-width="4" fill="none" />
        <path d="M158 656.500H486l6 4 4-4 3 0H540l8 4 8-4H813" stroke="#fff" stroke-width="1.200" fill="none" />

        <text v-for="(a, i) in axisSmall" :key="'as' + i" class="axis" :transform="`translate(1318 ${a[1] + 4}) scale(.83 1)`">{{ a[0] }}</text>
        <rect x="1314" y="462" width="9" height="11" fill="#111" />
        <text class="axis light" transform="translate(1316 471) scale(.83 1)">0</text>
        <rect x="1314" y="575" width="9" height="11" fill="#111" />
        <text class="axis light" transform="translate(1316 584) scale(.83 1)">0</text>

        <!-- time axis -->
        <g v-for="d in dates" :key="'d' + d[0]">
          <line :x1="d[2] + .5" :x2="d[2] + .5" y1="663" y2="667" stroke="#222" />
          <text class="axis" :transform="`translate(${d[1]} 676) scale(.86 1)`">{{ d[0] }}</text>
        </g>
      </svg>

      <section class="dialog">
        <div class="dlg-title">
          <span class="dlg-q">?</span>
          <svg width="13" height="13" viewBox="0 0 13 13"><path d="M1 1l11 11M12 1L1 12" stroke="#666" /></svg>
        </div>
        <div class="dlg-msg">
          <span class="dlg-text">strong sell</span>
          <div class="dlg-scroll">
            <svg width="9" height="6" viewBox="0 0 9 6"><path d="M1 5l3.500-3.500L8 5" stroke="#aaa" stroke-width="2" fill="none" /></svg>
            <svg width="9" height="6" viewBox="0 0 9 6"><path d="M1 1l3.500 3.500L8 1" stroke="#aaa" stroke-width="2" fill="none" /></svg>
          </div>
        </div>
        <div class="dlg-list">
          <div class="list-body">
            <div class="list-head">nal : strong sell</div>
            <div v-for="(r, i) in listRows" :key="i" class="list-row" :class="{ alt: i % 2 === 1 }">{{ r }}</div>
          </div>
          <div class="list-bar">
            <svg width="9" height="6" viewBox="0 0 9 6"><path d="M1 5l3.500-3.500L8 5" stroke="#333" stroke-width="1.600" fill="none" /></svg>
            <span class="list-thumb"></span>
            <svg width="9" height="6" viewBox="0 0 9 6"><path d="M1 1l3.500 3.500L8 1" stroke="#333" stroke-width="1.600" fill="none" /></svg>
          </div>
        </div>
        <span class="dlg-btn"></span>
      </section>
    </main>

    <div class="tabs">
      <span v-for="(t, i) in tabs" :key="i" class="tab" :class="{ on: t.on }" :style="{ width: t.w + 'px' }">{{ t.t }}</span>
      <div class="tab-arrows">
        <svg width="5" height="9" viewBox="0 0 5 9"><path d="M4 0v9L0 4.500z" fill="#999" /></svg>
        <svg width="5" height="9" viewBox="0 0 5 9"><path d="M1 0v9l4-4.500z" fill="#999" /></svg>
      </div>
    </div>

    <footer class="status">
      <span v-for="(c, i) in statusCells" :key="i" class="cell" :style="{ width: c.w + 'px' }">{{ c.t }}</span>
      <span class="meter">
        <span class="meter-bars">
          <span v-for="b in meterBars" :key="b" class="meter-bar"></span>
        </span>
        6919/2 kb
      </span>
    </footer>
  </div>
</template>

<style>
html, body { margin: 0; padding: 0; background: #f0f0f0; overflow: hidden; }
</style>

<style scoped>
.app { width: 1366px; height: 728px; display: flex; flex-direction: column; overflow: hidden; font-family: Roboto, "Liberation Sans", sans-serif; color: #111; background: #f0f0f0; }

.title { height: 23px; background: #c437ae; color: #f7e9f5; display: flex; align-items: center; padding-left: 3px; flex: none; }
.app-ico { flex: none; }
.title-text { margin-left: 4px; font-size: 13px; letter-spacing: -.45px; white-space: nowrap; }
.win-btns { margin-left: auto; display: flex; align-items: center; gap: 36px; padding-right: 20px; }

.menu { height: 20px; flex: none; display: grid; grid-template-columns: 28px 36px 68px 60px 52px 70px 59px 1fr auto; align-items: center; background: #f0f0f0; font-size: 12.5px; }
.menu-ico { padding-left: 4px; display: flex; }
.menu-item { letter-spacing: -.45px; }
.mdi { grid-column: 9; display: flex; gap: 3px; padding-right: 1px; }
.mdi-btn { width: 15px; height: 16px; border: 1px solid #fff; display: flex; align-items: center; justify-content: center; }

.toolbar { height: 27px; flex: none; display: flex; align-items: center; background: #f0f0f0; border-top: 1px solid #a8a8a8; box-sizing: border-box; }
.t-sep { width: 1px; height: 24px; background: #b0b0b0; flex: none; }
.t-grip { width: 3px; height: 22px; flex: none; background-image: repeating-linear-gradient(to bottom, #aaa 0 1px, transparent 1px 2px); }
.t-drop { width: 1px; height: 0; border-left: 2px solid transparent; border-right: 2px solid transparent; border-top: 3px solid #111; margin-top: 2px; flex: none; }
.t-label { font-size: 12.5px; letter-spacing: -.1px; white-space: nowrap; flex: none; }
.t-icon { height: 25px; display: flex; align-items: center; justify-content: center; flex: none; }
.t-tf { height: 25px; display: flex; align-items: center; justify-content: center; flex: none; font-size: 11.5px; color: #555; letter-spacing: -.2px; }
.hi { background: #f8f8f8; border: 1px solid #dcdcdc; box-sizing: border-box; }

.chart { flex: 1; position: relative; background: #a9a9a9; min-height: 0; overflow: hidden; }
.plot { display: block; }
text { font-family: "Liberation Sans", Arial, sans-serif; }
.big-sym { font-size: 51px; fill: #fff; }
.big-price { font-size: 51px; fill: #ff4500; }
.bullish { font-size: 15px; fill: #dfdfe8; }
.superg { font-size: 13px; fill: #0000ff; }
.chart-head { font-size: 11px; fill: #222; }
.ironclad { font-size: 37px; fill: #f02828; }
.fib { font-size: 11px; }
.teal { fill: #109a90; }
.box-t { font-size: 13px; }
.redzone { font-size: 66px; fill: #000; stroke: #000; stroke-width: 2px; }
.rz-r { font-size: 88px; }
.pdot { font-size: 62px; font-weight: 700; fill: #ffee00; stroke: #ffee00; stroke-width: 1px; }
.axis { font-size: 11px; fill: #222; }
.axis.light { fill: #f0f0f0; }
.ind { font-size: 11px; fill: #333; }

.dialog { position: absolute; left: 0; top: 344px; width: 158px; height: 248px; background: #f0f0f0; box-shadow: 2px 2px 8px rgba(0, 0, 0, .45); display: flex; flex-direction: column; font-size: 12px; letter-spacing: -.4px; overflow: hidden; }
.dlg-title { height: 30px; flex: none; background: #fff; display: flex; align-items: center; justify-content: flex-end; gap: 34px; padding-right: 16px; }
.dlg-q { font-size: 15px; color: #888; }
.dlg-msg { height: 85px; flex: none; position: relative; display: flex; justify-content: space-between; padding-right: 12px; }
.dlg-text { margin-top: 16px; margin-left: -8px; }
.dlg-scroll { height: 60px; margin-top: 6px; padding: 6px 0 4px 4px; border-left: 1px solid #e0e0e0; display: flex; flex-direction: column; justify-content: space-between; box-sizing: border-box; width: 15px; }
.dlg-list { width: 150px; height: 94px; border: 1px solid #8a98a8; border-left: none; box-sizing: border-box; display: flex; background: #fff; flex: none; }
.list-body { flex: 1; padding-top: 1px; overflow: hidden; }
.list-head { height: 19px; line-height: 19px; background: #e8e8e8; text-indent: -6px; }
.list-row { height: 19px; line-height: 19px; border-top: 1px solid #c8c8c8; background: #fff; text-indent: -2px; }
.list-row.alt { background: #e8e8e8; }
.list-bar { width: 16px; background: #f0f0f0; display: flex; flex-direction: column; align-items: center; padding-top: 6px; gap: 5px; }
.list-bar svg:last-child { margin-top: 33px; }
.list-thumb { width: 16px; height: 18px; background: #cdcdcd; }
.dlg-btn { margin-top: 10px; width: 7px; height: 20px; background: #e1e1e1; border: 1px solid #adadad; }

.tabs { height: 21px; flex: none; display: flex; align-items: center; background: #f0f0f0; border-top: 1px solid #000; box-sizing: border-box; padding-left: 4px; font-size: 12.5px; color: #555; letter-spacing: -.55px; position: relative; }
.tab { height: 14px; line-height: 14px; text-align: center; border-right: 1px solid #888; flex: none; box-sizing: border-box; white-space: nowrap; }
.tab.on { height: 20px; line-height: 18px; background: #fff; color: #111; border: 1px solid #000; border-top: none; margin-top: -1px; }
.tab-arrows { margin-left: auto; display: flex; gap: 14px; padding-right: 10px; }

.status { height: 22px; flex: none; display: flex; align-items: center; background: #f0f0f0; font-size: 12.5px; letter-spacing: -.25px; }
.cell { height: 18px; line-height: 18px; border-right: 1px solid #b8b8b8; box-sizing: border-box; padding-left: 2px; flex: none; white-space: nowrap; }
.cell:nth-child(2) { padding-left: 5px; }
.meter { display: flex; align-items: center; margin-left: 5px; gap: 5px; white-space: nowrap; letter-spacing: -.4px; }
.meter-bars { display: flex; gap: 1px; height: 14px; }
.meter-bar { width: 2px; height: 14px; background: linear-gradient(to bottom, #6a7f10 0 55%, #1a5a78 55% 100%); }
</style>
